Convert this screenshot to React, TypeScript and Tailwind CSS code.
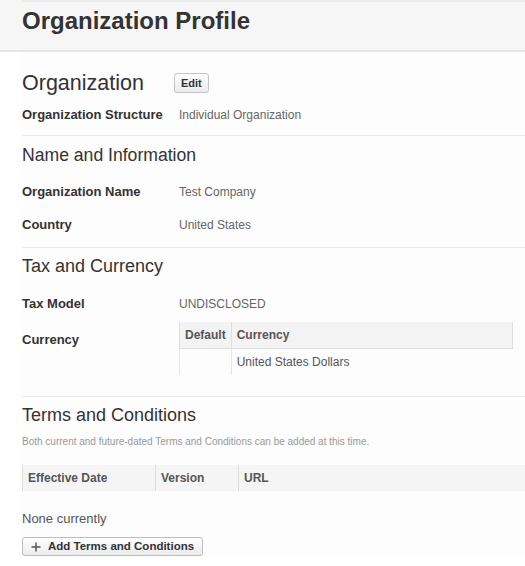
import React from "react";

const Row = ({ label, children, className = "" }: { label: string; children: React.ReactNode; className?: string }) => (
  <div className={`flex items-center ${className}`}>
    <div className="w-[157px] shrink-0 text-[13px] font-bold text-[#333]">{label}</div>
    <div className="text-[12px] text-[#666]">{children}</div>
  </div>
);

export default function App() {
  return (
    <div className="min-h-[566px] w-[525px] bg-white font-['Liberation_Sans',Arial,sans-serif] text-[#333]">
      {/* header */}
      <div className="h-[52px] border-b-2 border-[#e6e6e6] bg-[#f6f6f6]">
        <div className="ml-[22px] h-[2px] bg-[#ececec]" />
        <h1 className="ml-[22px] pt-[4px] text-[24px] font-bold leading-[30px] text-[#333]">Organization Profile</h1>
      </div>

      <div className="ml-[22px] bg-[#fdfdfd]">
        {/* organization */}
        <div className="border-b border-[#e8e8e8] pb-[12px]">
          <div className="flex items-center pt-[18px]">
            <h2 className="text-[21.5px] leading-[26px] text-[#333]">Organization</h2>
            <button className="ml-[30px] h-[20px] rounded-[3px] border border-[#c4c4c4] bg-gradient-to-b from-white to-[#ececec] px-[6px] text-[11px] font-bold leading-[18px] text-[#333]">
              Edit
            </button>
          </div>
          <Row label="Organization Structure" className="mt-[11px] h-[16px]">Individual Organization</Row>
        </div>

        {/* name and information */}
        <div className="border-b border-[#e8e8e8] pb-[14px]">
          <h3 className="pt-[9px] text-[17.6px] leading-[20px]">Name and Information</h3>
          <Row label="Organization Name" className="mt-[19px] h-[16px]">Test Company</Row>
          <Row label="Country" className="mt-[17px] h-[16px]">United States</Row>
        </div>

        {/* tax and currency */}
        <div className="border-b border-[#e8e8e8] pb-[21px]">
          <h3 className="pt-[8px] text-[18px] leading-[20px]">Tax and Currency</h3>
          <Row label="Tax Model" className="mt-[20px] h-[16px]">UNDISCLOSED</Row>
          <div className="mt-[10px] flex items-start">
            <div className="w-[157px] shrink-0 pt-[8px] text-[13px] font-bold">Currency</div>
            <table className="w-[334px] border-collapse text-[12px]">
              <thead>
                <tr className="h-[26px] bg-[#f3f3f3]">
                  <th className="w-[51px] border-l border-r border-b border-[#dedede] px-[5px] text-left font-bold text-[#555]">Default</th>
                  <th className="border-r border-b border-[#dedede] px-[5px] text-left font-bold text-[#555]">Currency</th>
                </tr>
              </thead>
              <tbody>
                <tr className="h-[27px]">
                  <td className="border-l border-r border-[#e6e6e6]" />
                  <td className="px-[5px] text-[#555]">United States Dollars</td>
                </tr>
              </tbody>
            </table>
          </div>
        </div>

        {/* terms */}
        <div>
          <h3 className="pt-[8px] text-[18px] leading-[20px]">Terms and Conditions</h3>
          <p className="mt-[11px] text-[10px] leading-[12px] text-[#999]">
            Both current and future-dated Terms and Conditions can be added at this time.
          </p>
          <div className="mt-[17px] flex h-[26px] items-center bg-[#f5f5f5] text-[12px] font-bold text-[#555]">
            <div className="flex h-full w-[133px] items-center border-l border-[#dcdcdc] pl-[5px]">Effective Date</div>
            <div className="flex h-full w-[83px] items-center border-l border-[#dcdcdc] pl-[5px]">Version</div>
            <div className="flex h-full items-center border-l border-[#dcdcdc] pl-[5px]">URL</div>
          </div>
          <p className="mt-[20px] text-[13px] leading-[16px] text-[#555]">None currently</p>
          <button className="mt-[10px] flex h-[19px] w-[181px] items-center rounded-[3px] border border-[#bdbdbd] bg-gradient-to-b from-white to-[#ebebeb] pl-[8px] text-[11.5px] font-bold text-[#333]">
            <svg width="10" height="10" viewBox="0 0 10 10" className="mr-[7px]">
              <path d="M5 0.5v9M0.5 5h9" stroke="#555" strokeWidth="1.5" />
            </svg>
            Add Terms and Conditions
          </button>
        </div>
      </div>
    </div>
  );
}
